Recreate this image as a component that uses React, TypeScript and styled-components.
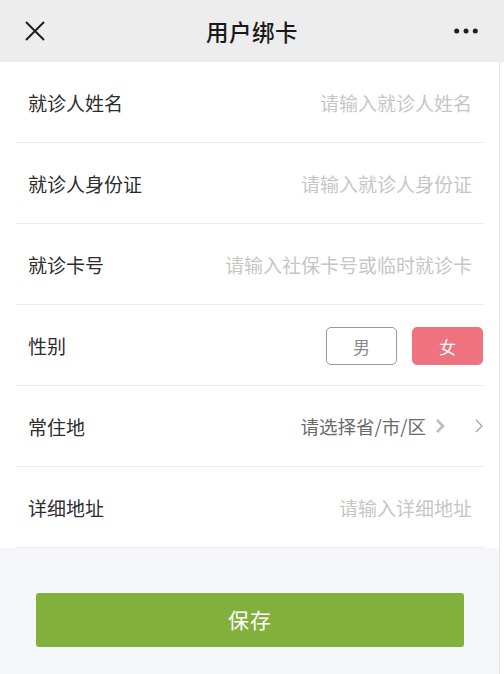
import * as React from 'react';
import styled, { createGlobalStyle } from 'styled-components';

const GlobalStyle = createGlobalStyle`
  html, body {
    margin: 0;
    padding: 0;
    background: #ffffff;
  }
  body {
    font-family: "Noto Sans CJK SC", "Noto Sans", sans-serif;
    -webkit-font-smoothing: antialiased;
  }
  * {
    box-sizing: border-box;
  }
`;

const Page = styled.div`
  width: 504px;
  height: 674px;
  display: flex;
  flex-direction: column;
  overflow: hidden;
`;

const Header = styled.header`
  height: 62px;
  flex-shrink: 0;
  background-color: #ededed;
  display: grid;
  grid-template-columns: 70px 1fr 70px;
  align-items: center;
`;

const IconBtn = styled.button<{ $align: 'left' | 'right' }>`
  border: 0;
  background: transparent;
  padding: 0;
  height: 40px;
  display: flex;
  align-items: center;
  justify-content: ${(p) => (p.$align === 'left' ? 'flex-start' : 'flex-end')};
  padding-left: ${(p) => (p.$align === 'left' ? '24px' : '0')};
  padding-right: ${(p) => (p.$align === 'right' ? '26px' : '0')};
  color: #1f1f1f;
`;

const Title = styled.h1`
  margin: 0;
  text-align: center;
  font-size: 22.5px;
  font-weight: 500;
  color: #1a1a1a;
  letter-spacing: 0.5px;
`;

const Body = styled.div`
  flex: 1;
  display: flex;
  flex-direction: column;
  border-right: 1px solid #e6e6e6;
  margin-right: 4px;
`;

const Form = styled.div`
  background: #ffffff;
`;

const Row = styled.div`
  height: 81px;
  margin: 0 15px 0 16px;
  padding: 0 0 0 12px;
  border-bottom: 1px solid #ececec;
  display: flex;
  align-items: center;
  justify-content: space-between;
`;

const Label = styled.span`
  font-size: 19px;
  color: #2c2c2c;
`;

const Placeholder = styled.span`
  font-size: 19px;
  color: #c6c6c6;
  padding-right: 12px;
`;

const Choices = styled.div`
  display: flex;
  gap: 15px;
  margin-top: 2px;
  padding-right: 1px;
`;

const Choice = styled.button<{ $active?: boolean }>`
  width: 71px;
  height: 38px;
  border-radius: 5px;
  font-family: inherit;
  font-size: 17px;
  border: 1px solid ${(p) => (p.$active ? '#ef737f' : '#9a9a9a')};
  background: ${(p) => (p.$active ? '#ef737f' : '#ffffff')};
  color: ${(p) => (p.$active ? '#ffffff' : '#8a8a8a')};
`;

const Picker = styled.div`
  display: flex;
  align-items: center;
`;

const PickerText = styled.span`
  font-size: 18.5px;
  color: #6a6a6a;
`;

const Chevron = styled.svg<{ $gap: number }>`
  margin-left: ${(p) => p.$gap}px;
  display: block;
`;

const Footer = styled.div`
  flex: 1;
  background-color: #f5f6f9;
  padding: 45px 35px 0 36px;
`;

const SaveButton = styled.button`
  width: 100%;
  height: 54px;
  border: 0;
  border-radius: 3px;
  background-color: #82b03c;
  color: #ffffff;
  font-family: inherit;
  font-size: 21px;
  letter-spacing: 1px;
  padding-bottom: 4px;
`;

const fields = [
  { label: '就诊人姓名', placeholder: '请输入就诊人姓名' },
  { label: '就诊人身份证', placeholder: '请输入就诊人身份证' },
  { label: '就诊卡号', placeholder: '请输入社保卡号或临时就诊卡' },
];

function App() {
  const [gender, setGender] = React.useState<'male' | 'female'>('female');

  return (
    <Page>
      <GlobalStyle />
      <Header>
        <IconBtn $align="left" aria-label="关闭">
          <svg width="22" height="22" viewBox="0 0 22 22">
            <path d="M2 2 L20 20 M20 2 L2 20" stroke="#1f1f1f" strokeWidth="2" />
          </svg>
        </IconBtn>
        <Title>用户绑卡</Title>
        <IconBtn $align="right" aria-label="更多">
          <svg width="24" height="6" viewBox="0 0 24 6">
            <circle cx="2.7" cy="3" r="2.5" fill="#1f1f1f" />
            <circle cx="12" cy="3" r="2.5" fill="#1f1f1f" />
            <circle cx="21.3" cy="3" r="2.5" fill="#1f1f1f" />
          </svg>
        </IconBtn>
      </Header>
      <Body>
        <Form>
          {fields.map((f) => (
            <Row key={f.label}>
              <Label>{f.label}</Label>
              <Placeholder>{f.placeholder}</Placeholder>
            </Row>
          ))}
          <Row>
            <Label>性别</Label>
            <Choices>
              <Choice $active={gender === 'male'} onClick={() => setGender('male')}>男</Choice>
              <Choice $active={gender === 'female'} onClick={() => setGender('female')}>女</Choice>
            </Choices>
          </Row>
          <Row>
            <Label>常住地</Label>
            <Picker>
              <PickerText>请选择省/市/区</PickerText>
              <Chevron $gap={9} width="10" height="16" viewBox="0 0 10 16">
                <path d="M2 2 L8 8 L2 14" fill="none" stroke="#bdbdbd" strokeWidth="2.6" />
              </Chevron>
              <Chevron $gap={29} width="10" height="16" viewBox="0 0 10 16">
                <path d="M2 2 L8 8 L2 14" fill="none" stroke="#a0a0a0" strokeWidth="1.2" />
              </Chevron>
            </Picker>
          </Row>
          <Row>
            <Label>详细地址</Label>
            <Placeholder>请输入详细地址</Placeholder>
          </Row>
        </Form>
        <Footer>
          <SaveButton>保存</SaveButton>
        </Footer>
      </Body>
    </Page>
  );
}

export default App;
